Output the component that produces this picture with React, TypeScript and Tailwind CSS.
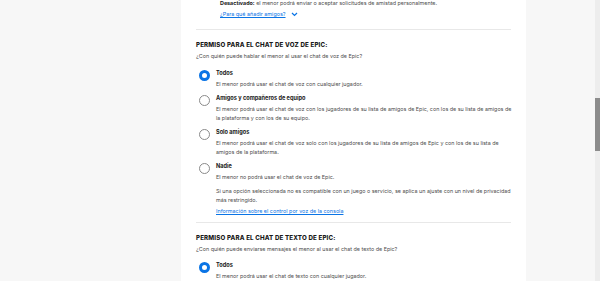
import React from 'react';

type Option = {
  label: string;
  lines: string[];
  selected?: boolean;
};

const VOICE_OPTIONS: Option[] = [
  { label: 'Todos', lines: ['El menor podrá usar el chat de voz con cualquier jugador.'], selected: true },
  {
    label: 'Amigos y compañeros de equipo',
    lines: [
      'El menor podrá usar el chat de voz con los jugadores de su lista de amigos de Epic, con los de su lista de amigos de',
      'la plataforma y con los de su equipo.',
    ],
  },
  {
    label: 'Solo amigos',
    lines: [
      'El menor podrá usar el chat de voz solo con los jugadores de su lista de amigos de Epic y con los de su lista de',
      'amigos de la plataforma.',
    ],
  },
  { label: 'Nadie', lines: ['El menor no podrá usar el chat de voz de Epic.'] },
];

const body = 'whitespace-nowrap text-[5.4px] leading-[9px] text-[#4d4d4d]';
const heading = 'text-[6.2px] font-extrabold uppercase leading-[9px] tracking-[0.15px] text-[#1a1a1a]';

function Radio({ selected }: { selected?: boolean }) {
  return selected ? (
    <span className="mt-[0.5px] box-border block h-[11px] w-[11px] shrink-0 rounded-full border-[3px] border-[#0a74e5] bg-white" />
  ) : (
    <span className="mt-[0.5px] box-border block h-[11px] w-[11px] shrink-0 rounded-full border border-[#8a8a8a] bg-white" />
  );
}

function Lines({ lines, className = '' }: { lines: string[]; className?: string }) {
  return (
    <div className={className}>
      {lines.map((l) => (
        <p key={l} className={body}>
          {l}
        </p>
      ))}
    </div>
  );
}

function OptionRow({ opt, children }: { opt: Option; children?: React.ReactNode }) {
  return (
    <div className="flex gap-[6px] pl-[3px]">
      <Radio selected={opt.selected} />
      <div className="flex-1">
        <p className="text-[5.6px] font-bold leading-[9px] text-[#1a1a1a]">{opt.label}</p>
        <Lines lines={opt.lines} className="mt-[2px]" />
        {children}
      </div>
    </div>
  );
}

export default function App() {
  return (
    <div
      className="flex h-[281px] w-[600px] overflow-hidden bg-[#f7f7f7]"
      style={{ fontFamily: 'Inter, "Liberation Sans", sans-serif' }}
    >
      <div className="w-[181px] shrink-0" />
      <div className="w-[345px] shrink-0 bg-white px-[15px]">
        <div className="mt-[-1px] pl-[24px]">
          <p className={body}>
            <span className="font-bold text-[#1a1a1a]">Desactivado:</span> el menor podrá enviar o aceptar
            solicitudes de amistad personalmente.
          </p>
          <div className="mt-[2px] flex items-center gap-[5px]">
            <span className="text-[5.4px] leading-[9px] text-[#0a74e5] underline">¿Para qué añadir amigos?</span>
            <svg width="7" height="5" viewBox="0 0 7 5" fill="none">
              <path d="M1 1l2.5 2.5L6 1" stroke="#0a74e5" strokeWidth="1.2" />
            </svg>
          </div>
        </div>
        <div className="mt-[10px] h-px bg-[#e8e8e8]" />

        <h3 className={`mt-[10px] ${heading}`}>Permiso para el chat de voz de Epic:</h3>
        <p className={`mt-[3px] ${body}`}>¿Con quién puede hablar el menor al usar el chat de voz de Epic?</p>
        <div className="mt-[8px] flex flex-col gap-[5px]">
          {VOICE_OPTIONS.map((opt) => (
            <OptionRow key={opt.label} opt={opt}>
              {opt.label === 'Nadie' && (
                <>
                  <Lines
                    className="mt-[5px]"
                    lines={[
                      'Si una opción seleccionada no es compatible con un juego o servicio, se aplica un ajuste con un nivel de privacidad',
                      'más restringido.',
                    ]}
                  />
                  <p className="mt-[2px] text-[5.4px] leading-[9px] text-[#0a74e5] underline">
                    Información sobre el control por voz de la consola
                  </p>
                </>
              )}
            </OptionRow>
          ))}
        </div>
        <div className="mt-[6px] h-px bg-[#e8e8e8]" />

        <h3 className={`mt-[10px] ${heading}`}>Permiso para el chat de texto de Epic:</h3>
        <p className={`mt-[3px] ${body}`}>
          ¿Con quién puede enviarse mensajes el menor al usar el chat de texto de Epic?
        </p>
        <div className="mt-[7px]">
          <OptionRow
            opt={{ label: 'Todos', lines: ['El menor podrá usar el chat de texto con cualquier jugador.'], selected: true }}
          />
        </div>
      </div>
      <div className="flex-1" />
      <div className="relative w-[5px] shrink-0 bg-[#ededed]">
        <div className="absolute left-0 top-[98px] h-[53px] w-[5px] bg-[#8c8c8c]" />
      </div>
    </div>
  );
}
